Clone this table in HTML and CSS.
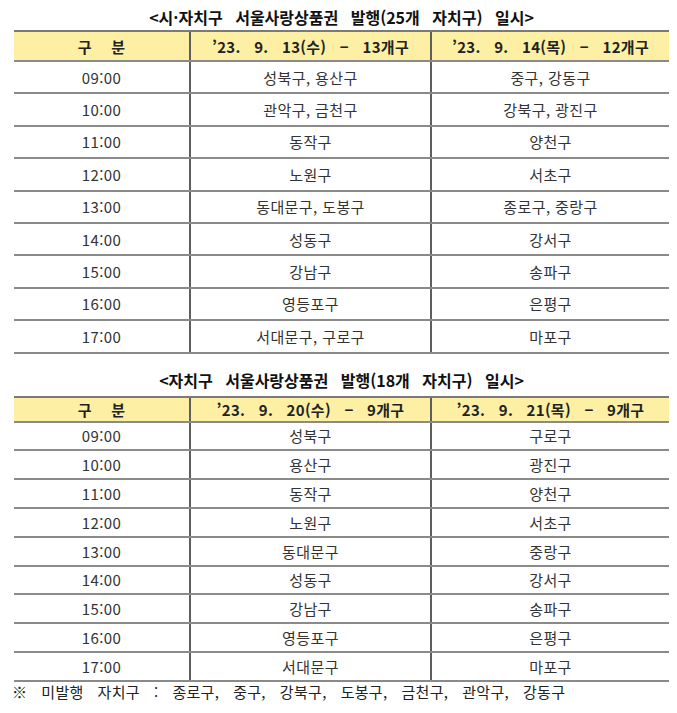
FILE: index.html
```html
<!DOCTYPE html>
<html lang="ko">
<head>
<meta charset="utf-8">
<link rel="stylesheet" href="styles.css">
</head>
<body>
<div class="doc">
  <div class="title t1">&lt;시·자치구 서울사랑상품권 발행(25개 자치구) 일시&gt;</div>
  <div class="tbl tbl1">
    <div class="row head"><div class="c lbl">구&nbsp;&nbsp;&nbsp;분</div><div class="c">’23. 9. 13(수) − 13개구</div><div class="c">’23. 9. 14(목) − 12개구</div></div>
    <div class="row"><div class="c">09:00</div><div class="c">성북구, 용산구</div><div class="c">중구, 강동구</div></div>
    <div class="row"><div class="c">10:00</div><div class="c">관악구, 금천구</div><div class="c">강북구, 광진구</div></div>
    <div class="row"><div class="c">11:00</div><div class="c">동작구</div><div class="c">양천구</div></div>
    <div class="row"><div class="c">12:00</div><div class="c">노원구</div><div class="c">서초구</div></div>
    <div class="row"><div class="c">13:00</div><div class="c">동대문구, 도봉구</div><div class="c">종로구, 중랑구</div></div>
    <div class="row"><div class="c">14:00</div><div class="c">성동구</div><div class="c">강서구</div></div>
    <div class="row"><div class="c">15:00</div><div class="c">강남구</div><div class="c">송파구</div></div>
    <div class="row"><div class="c">16:00</div><div class="c">영등포구</div><div class="c">은평구</div></div>
    <div class="row"><div class="c">17:00</div><div class="c">서대문구, 구로구</div><div class="c">마포구</div></div>
  </div>
  <div class="title t2">&lt;자치구 서울사랑상품권 발행(18개 자치구) 일시&gt;</div>
  <div class="tbl tbl2">
    <div class="row head"><div class="c lbl">구&nbsp;&nbsp;&nbsp;분</div><div class="c">’23. 9. 20(수) − 9개구</div><div class="c">’23. 9. 21(목) − 9개구</div></div>
    <div class="row"><div class="c">09:00</div><div class="c">성북구</div><div class="c">구로구</div></div>
    <div class="row"><div class="c">10:00</div><div class="c">용산구</div><div class="c">광진구</div></div>
    <div class="row"><div class="c">11:00</div><div class="c">동작구</div><div class="c">양천구</div></div>
    <div class="row"><div class="c">12:00</div><div class="c">노원구</div><div class="c">서초구</div></div>
    <div class="row"><div class="c">13:00</div><div class="c">동대문구</div><div class="c">중랑구</div></div>
    <div class="row"><div class="c">14:00</div><div class="c">성동구</div><div class="c">강서구</div></div>
    <div class="row"><div class="c">15:00</div><div class="c">강남구</div><div class="c">송파구</div></div>
    <div class="row"><div class="c">16:00</div><div class="c">영등포구</div><div class="c">은평구</div></div>
    <div class="row"><div class="c">17:00</div><div class="c">서대문구</div><div class="c">마포구</div></div>
  </div>
  <div class="note">※ 미발행 자치구 : 종로구, 중구, 강북구, 도봉구, 금천구, 관악구, 강동구</div>
</div>
</body>
</html>
```

FILE: styles.css
```css
html, body {
  margin: 0;
  padding: 0;
  background: #ffffff;
}
.doc {
  width: 655px;
  padding-left: 14px;
  font-family: "Noto Sans CJK KR", "Noto Sans", sans-serif;
  color: #333333;
}
.title {
  display: flex;
  justify-content: center;
  font-weight: bold;
  font-size: 16px;
  word-spacing: 8px;
  color: #111111;
  box-sizing: border-box;
}
.t1 {
  height: 30px;
  align-items: center;
  padding-top: 4px;
}
.t2 {
  height: 42px;
  align-items: flex-end;
  padding-bottom: 4px;
}
.tbl {
  display: flex;
  flex-direction: column;
}
.row {
  display: grid;
  grid-template-columns: 177px 241px 237px;
  box-sizing: border-box;
  border-bottom: 2px solid #8a8a8a;
}
.row.head {
  background: #fdf0a4;
  border-top: 2px solid #7a7a7a;
  font-weight: bold;
  color: #222222;
  word-spacing: 9px;
}
.c {
  display: flex;
  align-items: center;
  justify-content: center;
  font-size: 15px;
  letter-spacing: 0.4px;
  white-space: pre;
}
.row.head .c {
  letter-spacing: 0.3px;
}
.row.head .c.lbl {
  word-spacing: 2px;
}
.c:nth-child(1), .c:nth-child(2) {
  border-right: 2px solid #5e5e5e;
}
.tbl1 .row { height: 32.4px; }
.tbl1 .row.head { height: 32px; }
.tbl2 .row { height: 28.8px; }
.tbl2 .row.head { height: 27px; }
.note {
  font-size: 15px;
  height: 20px;
  line-height: 20px;
  margin-left: -2px;
  letter-spacing: 0.3px;
  word-spacing: 9.5px;
  color: #222222;
}
```
